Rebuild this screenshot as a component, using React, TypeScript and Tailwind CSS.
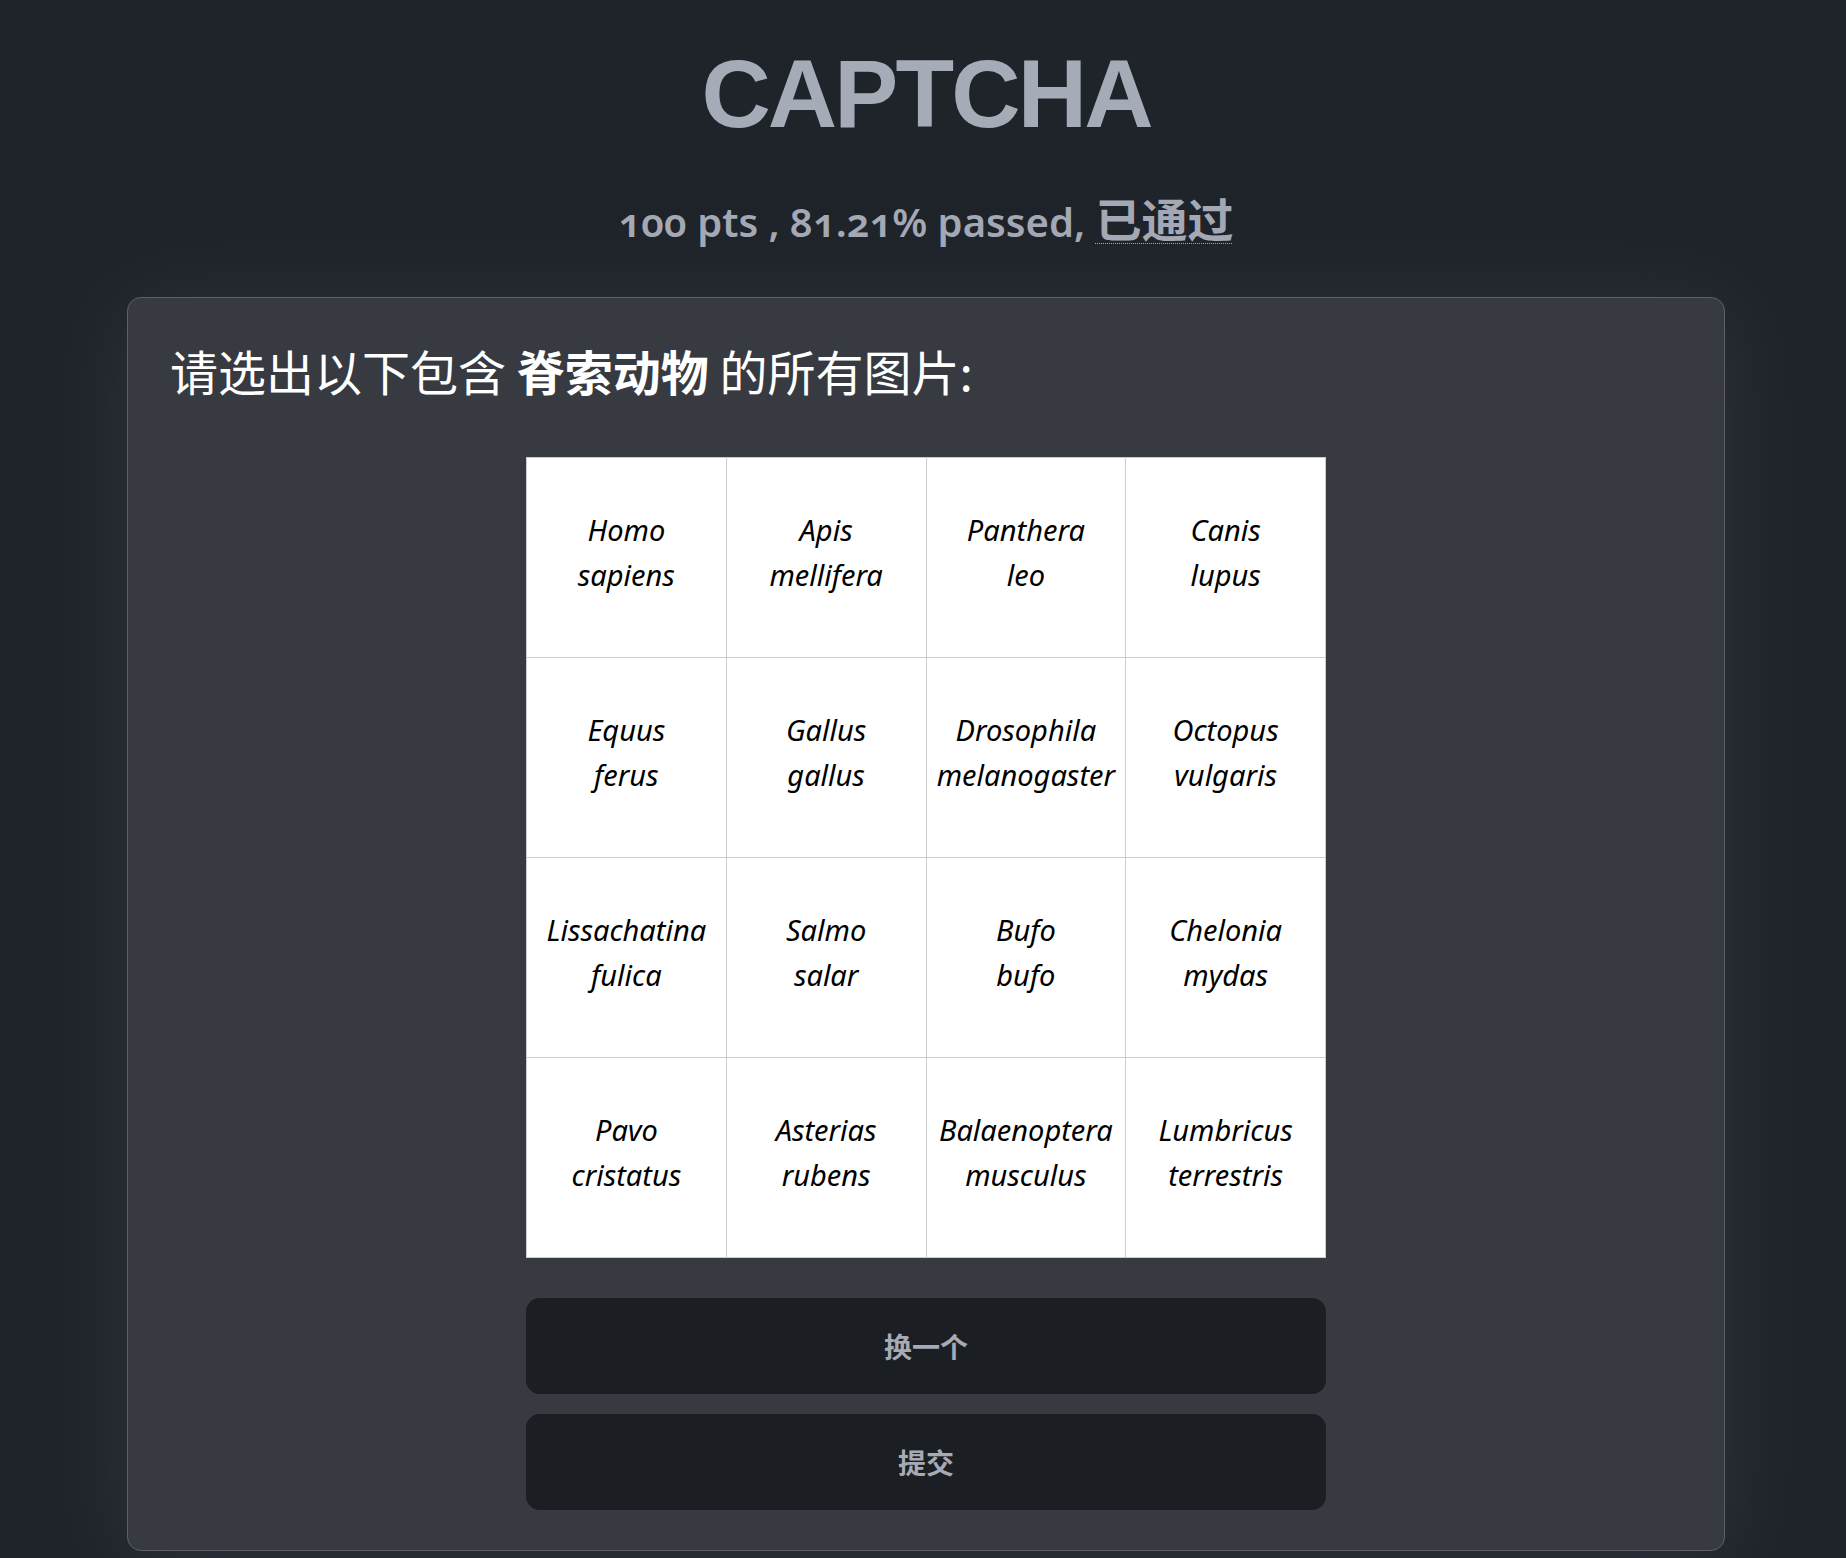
import React from 'react';

const species: [string, string][] = [
  ['Homo', 'sapiens'],
  ['Apis', 'mellifera'],
  ['Panthera', 'leo'],
  ['Canis', 'lupus'],
  ['Equus', 'ferus'],
  ['Gallus', 'gallus'],
  ['Drosophila', 'melanogaster'],
  ['Octopus', 'vulgaris'],
  ['Lissachatina', 'fulica'],
  ['Salmo', 'salar'],
  ['Bufo', 'bufo'],
  ['Chelonia', 'mydas'],
  ['Pavo', 'cristatus'],
  ['Asterias', 'rubens'],
  ['Balaenoptera', 'musculus'],
  ['Lumbricus', 'terrestris'],
];

function Cell({ genus, epithet }: { genus: string; epithet: string }) {
  return (
    <div className="flex h-[200px] cursor-pointer flex-col items-center justify-center border-b border-r border-[#cccccc] bg-white pb-[11px] text-center font-['Noto_Sans',sans-serif] text-[29px] leading-[45px] font-normal italic text-black">
      <span>{genus}</span>
      <span>{epithet}</span>
    </div>
  );
}

export default function App() {
  return (
    <div className="h-screen overflow-hidden bg-[#1f232a] pl-[6px] font-['Noto_Sans','Noto_Sans_CJK_SC',sans-serif]">
      <h1 className="pt-[46px] text-center font-['Liberation_Sans',Arial,sans-serif] text-[96px] font-bold leading-[96px] tracking-[-0.03em] text-[#a6abb8]">
        CAPTCHA
      </h1>

      {/* score line */}
      <p className="mt-[45px] text-center text-[40px] font-semibold leading-[60px] text-[#a4a8b4] [font-feature-settings:'onum']">
        100 pts , 81.21% passed,{' '}
        <span className="font-['Noto_Sans_CJK_SC',sans-serif] text-[46px] underline decoration-dotted decoration-1 underline-offset-[6px]">
          已通过
        </span>
      </p>

      <div className="mx-auto mt-[45px] w-[1598px] rounded-[14px] border border-[#5d6067] bg-[#373a40] px-[42px] pb-[40px] pt-[40px] shadow-[0_10px_90px_rgba(62,66,74,0.55)]">
        <h2 className="font-['Noto_Sans_CJK_SC',sans-serif] text-[48px] font-normal leading-[64px] text-white">
          请选出以下包含 <b className="font-bold">脊索动物</b> 的所有图片:
        </h2>

        <div className="mx-auto mt-[55px] w-[800px]">
          <div className="grid grid-cols-4 border-l border-t border-[#cccccc]">
            {species.map(([g, e]) => (
              <Cell key={g + e} genus={g} epithet={e} />
            ))}
          </div>

          <div className="mt-[40px] flex flex-col gap-[20px]">
            <button className="h-[96px] w-full rounded-[14px] bg-[#1b1e22] font-['Noto_Sans_CJK_SC',sans-serif] text-[28px] font-bold text-[#a6aab5]">
              换一个
            </button>
            <button className="h-[96px] w-full rounded-[14px] bg-[#1b1e22] font-['Noto_Sans_CJK_SC',sans-serif] text-[28px] font-bold text-[#a6aab5]">
              提交
            </button>
          </div>
        </div>
      </div>
    </div>
  );
}
